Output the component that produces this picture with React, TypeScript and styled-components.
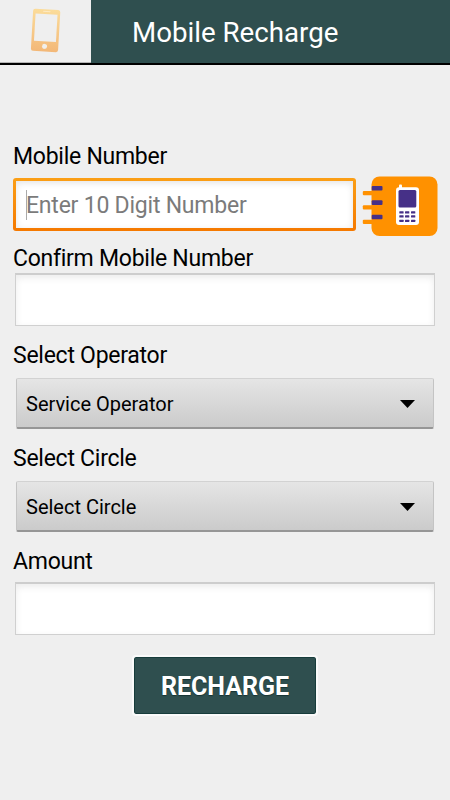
import React from "react";
import styled, { createGlobalStyle } from "styled-components";

const GlobalStyle = createGlobalStyle`
  * { box-sizing: border-box; }
  body { margin: 0; background: #efefef; }
`;

const Screen = styled.main`
  width: 450px;
  height: 800px;
  overflow: hidden;
  background: #efefef;
  color: #000;
  font-family: Roboto, "Liberation Sans", sans-serif;
`;

const Header = styled.header`
  display: flex;
  height: 65px;
  border-bottom: 2px solid #000;
  background: #2f4f4f;
`;

const LogoPanel = styled.div`
  width: 91px;
  height: 63px;
  padding: 8px 0 0 29px;
  background: #efefef;
  border-bottom: 1px solid #b5b5b5;
`;

const Title = styled.h1`
  margin: 0;
  padding-left: 41px;
  color: #fff;
  font-size: 27.7px;
  font-weight: 400;
  line-height: 65px;
  white-space: nowrap;
`;

const Form = styled.form`
  display: flex;
  flex-direction: column;
  padding: 77px 13px 0;
`;

const Label = styled.label<{ $before?: number; $after: number }>`
  height: 28px;
  margin-top: ${(p) => p.$before ?? 0}px;
  margin-bottom: ${(p) => p.$after}px;
  font-size: 23px;
  letter-spacing: -0.26px;
  line-height: 30px;
  white-space: nowrap;
`;

const NumberRow = styled.div`
  display: flex;
  height: 53px;
`;

const FocusedField = styled.div`
  display: flex;
  align-items: center;
  width: 343px;
  height: 53px;
  padding: 3px;
  border-radius: 3px;
  background: linear-gradient(#fb9f16, #f57900);
`;

const FieldInner = styled.div`
  display: flex;
  align-items: center;
  width: 337px;
  height: 47px;
  padding-left: 10px;
  background: #fff;
  box-shadow: inset 0 2px 7px #e4e4e4;
`;

const Caret = styled.span`
  width: 1px;
  height: 30px;
  background: #aaa;
`;

const Placeholder = styled.span`
  padding-top: 2px;
  margin-left: -1px;
  font-size: 23px;
  letter-spacing: -0.22px;
  line-height: 28px;
  color: #7b7b7b;
  white-space: nowrap;
`;

const ContactButton = styled.button`
  width: 76px;
  height: 62px;
  margin: -3px 0 0 6px;
  padding: 0;
  border: 0;
  background: none;
  svg { display: block; }
`;

const Field = styled.div`
  width: 420px;
  height: 53px;
  margin-left: 2px;
  border: 1px solid #d0d0d0;
  border-top: 2px solid #cdcdcd;
  background: #fff;
  box-shadow: inset 0 3px 7px #ececec;
`;

const Select = styled.div`
  display: flex;
  align-items: center;
  justify-content: space-between;
  width: 418px;
  height: 51px;
  margin-left: 3px;
  padding: 1px 18px 0 9px;
  border: 1px solid #c4c4c4;
  border-top-color: #d2d2d2;
  border-bottom: 2px solid #969696;
  border-radius: 2px;
  background: linear-gradient(#e5e5e5, #cbcbcb);
  font-size: 20px;
  line-height: 28px;
`;

const Recharge = styled.button`
  align-self: flex-start;
  width: 186px;
  height: 61px;
  margin: 20px 0 0 119px;
  padding: 0;
  border: 2px solid #fafafa;
  border-radius: 4px;
  background: #2f4f4f;
  background-clip: padding-box;
  box-shadow: inset 0 0 0 1px #173c3b;
  color: #fff;
  font-family: inherit;
  font-size: 25px;
  font-weight: 700;
  line-height: 59px;
  text-shadow: 0 1px 1px #173333;
`;

const PhoneLogo = () => (
  <svg width="34" height="46" viewBox="0 0 34 46">
    <defs>
      <linearGradient id="phone" x2="0" y2="1">
        <stop stopColor="#fbdc9a" />
        <stop offset="1" stopColor="#f3b878" />
      </linearGradient>
    </defs>
    <g transform="rotate(3.3 16.5 22.5)">
      <rect x="3" y="1.3" width="27.2" height="42.2" rx="2.2" fill="url(#phone)" />
      <rect x="5.6" y="6" width="22" height="27.5" fill="#efefef" />
      <rect x="13" y="3" width="7.5" height="1" rx=".5" fill="#fdeac4" />
      <circle cx="16.5" cy="38.4" r="2.5" fill="#f1efeb" />
    </g>
  </svg>
);

const ContactsIcon = () => (
  <svg width="76" height="62" viewBox="0 0 76 62">
    <rect x="9.5" y="1.4" width="66" height="59.6" rx="8" fill="#ff9100" />
    {[11, 25.3, 39.7].map((y) => (
      <g key={y}>
        <rect x=".8" y={y + 5} width="12" height="4.2" rx="1" fill="#ff9100" />
        <rect x="9.7" y={y} width="10.8" height="4.6" rx="1" fill="#463087" />
      </g>
    ))}
    <rect x="37" y="9.5" width="3" height="6" rx="1" fill="#fff" />
    <rect x="34" y="12.3" width="23" height="37.7" rx="3" fill="#fff" />
    <rect x="36.5" y="15" width="17.8" height="17.6" rx="1.5" fill="#463087" />
    {[36.3, 40.2, 44.8].map((y) =>
      [37.3, 43, 49].map((x) => (
        <rect key={`${x}-${y}`} x={x} y={y} width="4.3" height="2.2" rx=".5" fill="#463087" />
      )),
    )}
  </svg>
);

const Arrow = () => (
  <svg width="15" height="8" viewBox="0 0 15 8">
    <path d="M0 0h15L7.5 8Z" />
  </svg>
);

export default function App() {
  return (
    <>
      <GlobalStyle />
      <Screen>
        <Header>
          <LogoPanel><PhoneLogo /></LogoPanel>
          <Title>Mobile Recharge</Title>
        </Header>
        <Form>
          <Label $after={8}>Mobile Number</Label>
          <NumberRow>
            <FocusedField>
              <FieldInner>
                <Caret />
                <Placeholder>Enter 10 Digit Number</Placeholder>
              </FieldInner>
            </FocusedField>
            <ContactButton type="button" aria-label="Contacts"><ContactsIcon /></ContactButton>
          </NumberRow>
          <Label $before={13} $after={1}>Confirm Mobile Number</Label>
          <Field />
          <Label $before={15} $after={9}>Select Operator</Label>
          <Select><span>Service Operator</span><Arrow /></Select>
          <Label $before={15} $after={9}>Select Circle</Label>
          <Select><span>Select Circle</span><Arrow /></Select>
          <Label $before={15} $after={7}>Amount</Label>
          <Field />
          <Recharge type="button">RECHARGE</Recharge>
        </Form>
      </Screen>
    </>
  );
}
